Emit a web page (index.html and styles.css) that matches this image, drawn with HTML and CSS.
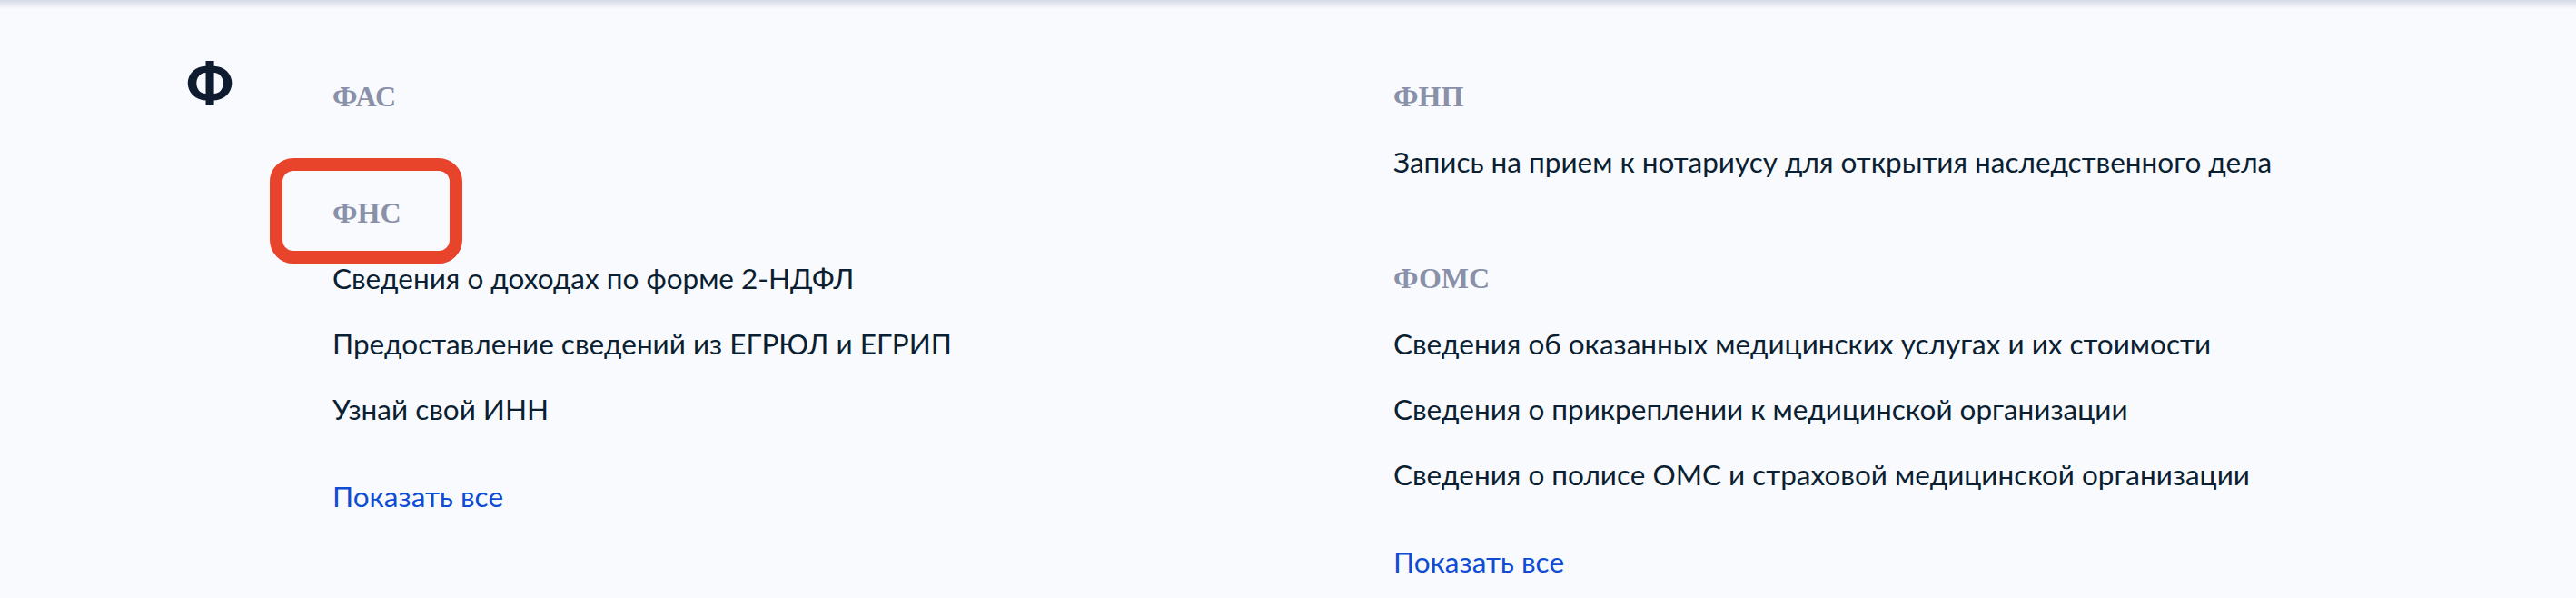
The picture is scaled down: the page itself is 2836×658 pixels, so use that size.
FILE: index.html
```html
<!DOCTYPE html>
<html lang="ru">
<head>
    <meta charset="UTF-8">
    <meta name="viewport" content="width=device-width, initial-scale=1.0">
    <title>Услуги по ведомствам</title>
    <link rel="stylesheet" href="styles.css">
</head>
<body>
    <div class="page">
        <div class="letter-group">
            <div class="letter">Ф</div>

            <div class="columns">
                <div class="column">
                    <div class="section">
                        <div class="section-title">ФАС</div>
                    </div>

                    <div class="section">
                        <div class="section-title"><span class="highlight">ФНС</span></div>
                        <a class="service" href="#">Сведения о доходах по форме 2-НДФЛ</a>
                        <a class="service" href="#">Предоставление сведений из ЕГРЮЛ и ЕГРИП</a>
                        <a class="service" href="#">Узнай свой ИНН</a>
                        <a class="show-all" href="#">Показать все</a>
                    </div>
                </div>

                <div class="column">
                    <div class="section">
                        <div class="section-title">ФНП</div>
                        <a class="service" href="#">Запись на прием к нотариусу для открытия наследственного дела</a>
                    </div>

                    <div class="section">
                        <div class="section-title">ФОМС</div>
                        <a class="service" href="#">Сведения об оказанных медицинских услугах и их стоимости</a>
                        <a class="service" href="#">Сведения о прикреплении к медицинской организации</a>
                        <a class="service" href="#">Сведения о полисе ОМС и страховой медицинской организации</a>
                        <a class="show-all" href="#">Показать все</a>
                    </div>
                </div>
            </div>
        </div>
    </div>
</body>
</html>
```

FILE: styles.css
```css
html, body {
    margin: 0;
    padding: 0;
    height: 100%;
    overflow: hidden;
}
body {
    font-family: Lato, "Noto Sans", sans-serif;
    color: #0b1f33;
    background: #f9fafd;
}
.page {
    height: 100%;
    background: linear-gradient(#d6dae6, #f9fafd 10px);
}
.letter-group {
    display: flex;
    padding: 70px 0 0 205px;
}
.letter {
    width: 161px;
    font-size: 64px;
    font-weight: 900;
    line-height: 44px;
    color: #0f1b2e;
}
.columns {
    display: grid;
    grid-template-columns: 1168px 1168px;
}
.section {
    margin-bottom: 56px;
}
.section:last-child {
    margin-bottom: 0;
}
.section-title {
    font-family: "Liberation Serif", serif;
    font-size: 32px;
    font-weight: bold;
    line-height: 72px;
    color: #8990a8;
}
.highlight {
    position: relative;
}
.highlight::after {
    content: '';
    position: absolute;
    left: -69px;
    top: -42px;
    width: 212px;
    height: 116px;
    box-sizing: border-box;
    border: 14px solid #e8432b;
    border-radius: 26px;
}
.service, .show-all {
    display: block;
    font-size: 31.5px;
    line-height: 72px;
    text-decoration: none;
    color: #0b1f33;
}
.show-all {
    margin-top: 24px;
    color: #0d4cd3;
}
```
